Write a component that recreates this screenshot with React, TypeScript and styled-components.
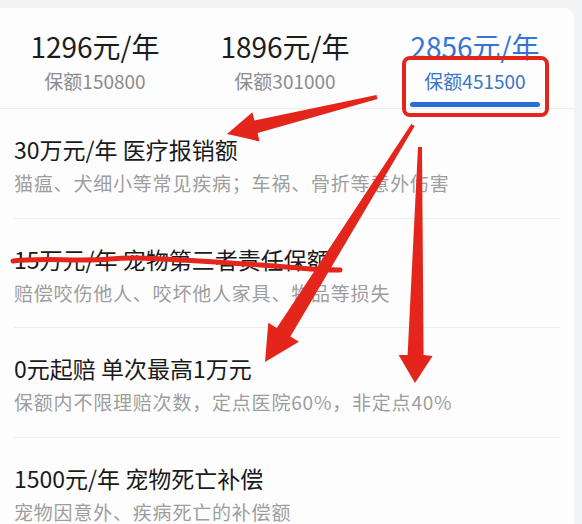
import React from "react";
import styled, { createGlobalStyle } from "styled-components";

const GlobalStyle = createGlobalStyle`
  html, body { margin: 0; padding: 0; background: #f3f4f6; }
  body {
    font-family: "Noto Sans CJK SC", "Noto Sans", sans-serif;
    -webkit-font-smoothing: antialiased;
  }
`;

const Page = styled.div`
  position: relative;
  width: 582px;
  height: 524px;
  overflow: hidden;
  background: #f3f4f6;
  padding-top: 8px;
  box-sizing: border-box;
`;

const Card = styled.div`
  width: 574px;
  height: 100%;
  background: #fdfdfe;
  border-radius: 0 10px 0 0;
`;

const Tabs = styled.div`
  display: grid;
  grid-template-columns: repeat(3, 190px);
  height: 101px;
  box-sizing: border-box;
  border-bottom: 1px solid #ebecef;
`;

const Tab = styled.div`
  display: flex;
  flex-direction: column;
  align-items: center;
  padding-top: 22px;
`;

const Price = styled.div<{ $active?: boolean }>`
  font-size: 28px;
  line-height: 32px;
  color: ${(p) => (p.$active ? "#3475d4" : "#1c1c1c")};
  white-space: nowrap;
`;

const Cover = styled.div<{ $active?: boolean }>`
  margin-top: 7px;
  font-size: 19px;
  line-height: 23px;
  color: ${(p) => (p.$active ? "#3a76c6" : "#8c8c8c")};
  white-space: nowrap;
`;

const Underline = styled.div<{ $active?: boolean }>`
  margin-top: 10px;
  width: 130px;
  height: 5px;
  border-radius: 3px;
  background: ${(p) => (p.$active ? "#2a6fd6" : "transparent")};
`;

const List = styled.div`
  padding: 0 14px;
`;

const Item = styled.div`
  padding: 25px 0 22.5px;
  border-bottom: 1px solid #eceef0;
`;

const Title = styled.div`
  font-size: 23px;
  line-height: 30px;
  font-weight: 400;
  color: #1a1a1a;
  white-space: nowrap;
`;

const Desc = styled.div`
  margin-top: 7px;
  font-size: 19px;
  line-height: 24px;
  letter-spacing: 0.8px;
  color: #9d9d9d;
  white-space: nowrap;
`;

const Overlay = styled.svg`
  position: absolute;
  left: 0;
  top: 0;
  width: 582px;
  height: 524px;
  pointer-events: none;
`;

const plans = [
  { price: "1296元/年", cover: "保额150800" },
  { price: "1896元/年", cover: "保额301000" },
  { price: "2856元/年", cover: "保额451500", active: true },
];

const items = [
  { title: "30万元/年 医疗报销额", desc: "猫瘟、犬细小等常见疾病；车祸、骨折等意外伤害" },
  { title: "15万元/年 宠物第三者责任保额", desc: "赔偿咬伤他人、咬坏他人家具、物品等损失" },
  { title: "0元起赔 单次最高1万元", desc: "保额内不限理赔次数，定点医院60%，非定点40%" },
  { title: "1500元/年 宠物死亡补偿", desc: "宠物因意外、疾病死亡的补偿额" },
];

const RED = "#e4251b";

export default function App() {
  return (
    <>
      <GlobalStyle />
      <Page>
        <Card>
          <Tabs>
            {plans.map((p) => (
              <Tab key={p.price}>
                <Price $active={p.active}>{p.price}</Price>
                <Cover $active={p.active}>{p.cover}</Cover>
                <Underline $active={p.active} />
              </Tab>
            ))}
          </Tabs>
          <List>
            {items.map((it) => (
              <Item key={it.title}>
                <Title>{it.title}</Title>
                <Desc>{it.desc}</Desc>
              </Item>
            ))}
          </List>
        </Card>
        <Overlay viewBox="0 0 582 524">
          <rect x="404" y="58" width="143" height="57" rx="6" fill="none" stroke={RED} strokeWidth="4" />
          <path
            d="M13 261 C 45 257, 75 262, 110 259 S 190 261, 245 264 S 305 270, 340 270"
            fill="none"
            stroke={RED}
            strokeWidth="5"
            strokeLinecap="round"
          />
          <polygon
            fill={RED}
            points="377.5,98.9 257.6,133.1 259.6,141.4 227,134 252.4,112.2 254.4,120.5 376.5,95.1"
          />
          <polygon
            fill={RED}
            points="414.7,126.1 290.4,336.5 298.9,341.8 265,362 268.3,322.8 276.8,328.1 411.3,123.9"
          />
          <polygon
            fill={RED}
            points="422,147 423.6,355 432.6,356 415,383 398.6,355 407.6,355 418,147"
          />
        </Overlay>
      </Page>
    </>
  );
}
